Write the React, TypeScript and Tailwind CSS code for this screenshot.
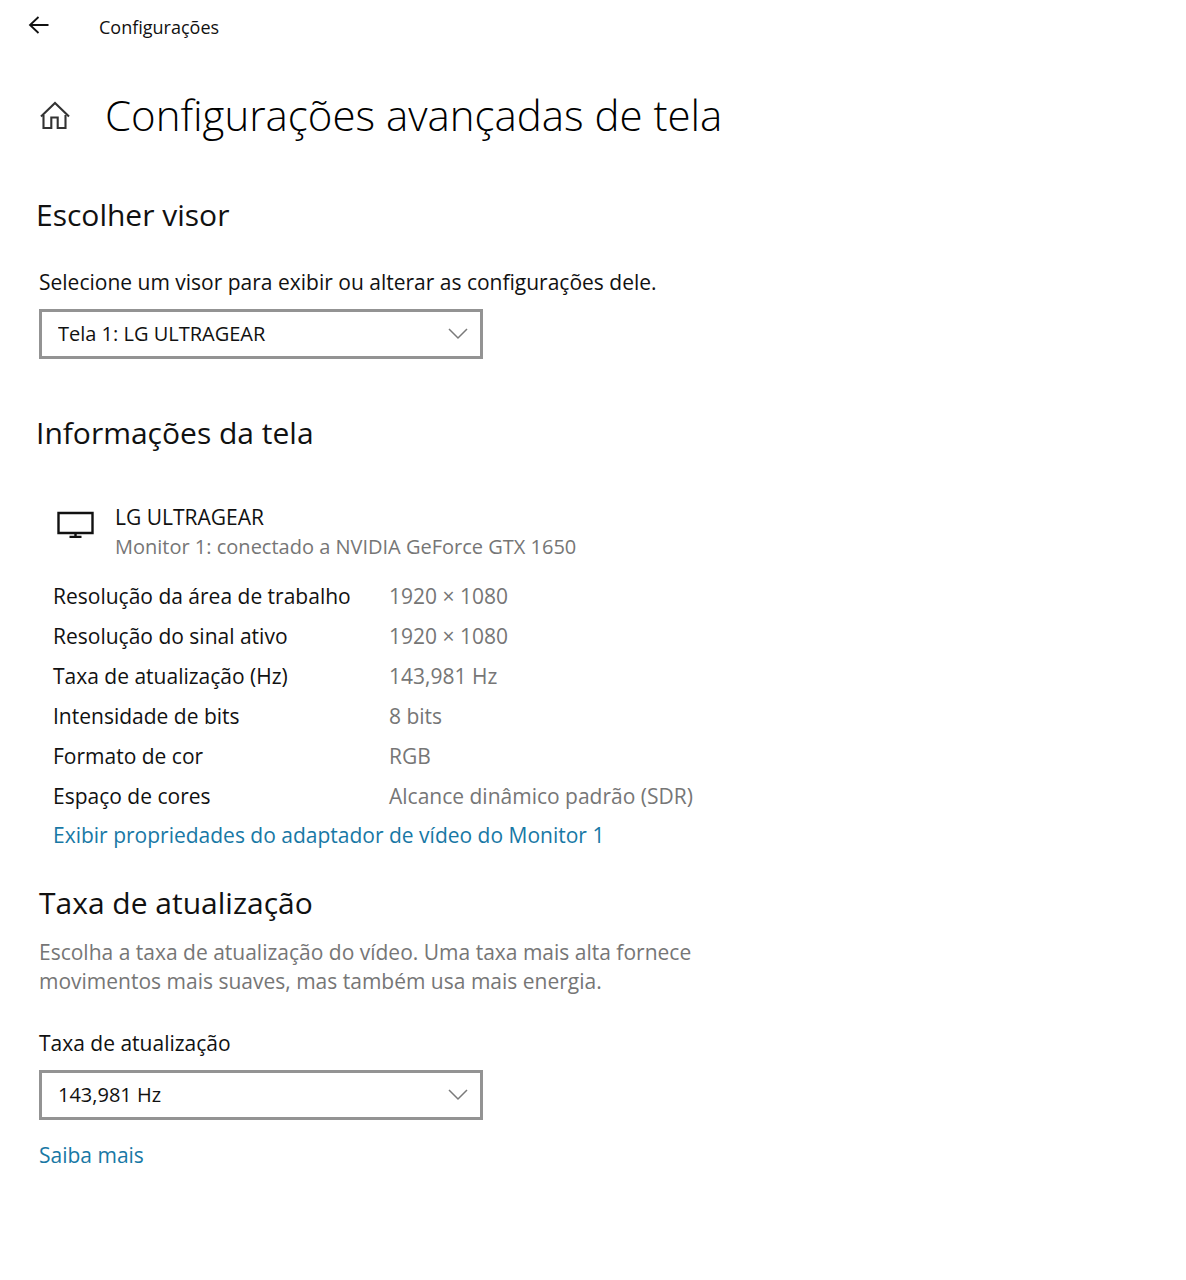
import React, { useState } from 'react';
import { clsx } from 'clsx';

const displayInfo = [
  { label: 'Resolução da área de trabalho', value: '1920 × 1080' },
  { label: 'Resolução do sinal ativo', value: '1920 × 1080' },
  { label: 'Taxa de atualização (Hz)', value: '143,981 Hz' },
  { label: 'Intensidade de bits', value: '8 bits' },
  { label: 'Formato de cor', value: 'RGB' },
  { label: 'Espaço de cores', value: 'Alcance dinâmico padrão (SDR)' },
];

const BackIcon = () => (
  <svg width="21" height="18" viewBox="0 0 21 18" fill="none" stroke="currentColor" strokeWidth="1.8">
    <path d="M20.5 9H2M10.5 1L2 9l8.5 8" />
  </svg>
);

const HomeIcon = () => (
  <svg width="31" height="28" viewBox="0 0 31 28" fill="none" stroke="currentColor" strokeWidth="2.1">
    <path d="M2 15.500L16 2l14 13.500" />
    <path d="M4.500 14v13h7.800V16.500h6.400V27h7.800V14" />
  </svg>
);

const MonitorIcon = () => (
  <svg width="38" height="28" viewBox="0 0 38 28" fill="none" stroke="currentColor" strokeWidth="2.4">
    <path d="M2.500 3h34v20h-34z" />
    <path d="M19.500 23v4M13.500 27h12" />
  </svg>
);

const ChevronIcon = () => (
  <svg width="20" height="12" viewBox="0 0 20 12" fill="none" stroke="currentColor" strokeWidth="1.5">
    <path d="M1 1l9 9 9-9" />
  </svg>
);

interface ComboBoxProps {
  id: string;
  label: string;
  options: string[];
  className?: string;
}

const ComboBox: React.FC<ComboBoxProps> = ({ id, label, options, className }) => {
  const [value, setValue] = useState(options[0]);

  return (
    <div className={clsx('px-[3px]', className)}>
      <label htmlFor={id} className="block leading-[30px]">{label}</label>
      <div className="relative mt-3 w-full max-w-[444px]">
        <select
          id={id}
          value={value}
          onChange={(e) => setValue(e.target.value)}
          className="block h-[50px] w-full appearance-none border-3 border-[#939393] bg-white pl-4 pr-12 text-[20px]"
        >
          {options.map((option) => (
            <option key={option}>{option}</option>
          ))}
        </select>
        <span className="pointer-events-none absolute inset-y-0 right-[15px] flex items-center text-[#7a7a7a]">
          <ChevronIcon />
        </span>
      </div>
    </div>
  );
};

export default function App() {
  return (
    <div className="min-h-screen bg-white pb-10 font-['Open_Sans','Noto_Sans',sans-serif] text-[21px] text-[#111]">
      {/* Title bar */}
      <header className="flex h-[54px] items-center gap-[50px] pl-7">
        <button type="button" aria-label="Voltar" className="pb-1">
          <BackIcon />
        </button>
        <span className="text-[18px]">Configurações</span>
      </header>

      <main className="px-9">
        <div className="mt-[29px] flex items-center gap-[35px] pl-[3px]">
          <button type="button" aria-label="Início" className="text-[#333]">
            <HomeIcon />
          </button>
          <h1 className="text-[42px] font-light leading-[64px] text-black">Configurações avançadas de tela</h1>
        </div>

        <section className="mt-12">
          <h2 className="text-[30px] leading-10">Escolher visor</h2>
          <ComboBox
            id="visor"
            label="Selecione um visor para exibir ou alterar as configurações dele."
            options={['Tela 1: LG ULTRAGEAR']}
            className="mt-8"
          />
        </section>

        <section className="mt-[54px]">
          <h2 className="text-[30px] leading-10">Informações da tela</h2>
          <div className="mt-[49px] flex gap-[21px] pl-5">
            <div className="pt-2">
              <MonitorIcon />
            </div>
            <div className="leading-[30px]">
              <p>LG ULTRAGEAR</p>
              <p className="text-[20px] text-[#767676]">Monitor 1: conectado a NVIDIA GeForce GTX 1650</p>
            </div>
          </div>
          <table className="ml-[17px] mt-[15px]">
            <tbody>
              {displayInfo.map((row) => (
                <tr key={row.label} className="h-10">
                  <th scope="row" className="w-[336px] p-0 text-left font-normal">{row.label}</th>
                  <td className="p-0 text-[#767676]">{row.value}</td>
                </tr>
              ))}
            </tbody>
          </table>
          <a href="#adaptador" className="ml-[17px] inline-block leading-[36px] text-[#1878a5]">
            Exibir propriedades do adaptador de vídeo do Monitor 1
          </a>
        </section>

        <section className="mt-[30px]">
          <h2 className="px-[3px] text-[30px] leading-10">Taxa de atualização</h2>
          <p className="mt-[15px] max-w-[680px] px-[3px] leading-[29px] text-[#767676]">
            Escolha a taxa de atualização do vídeo. Uma taxa mais alta fornece movimentos mais suaves, mas também usa mais energia.
          </p>
          <ComboBox id="taxa" label="Taxa de atualização" options={['143,981 Hz']} className="mt-8" />
          <a href="#saiba-mais" className="ml-[3px] mt-5 inline-block leading-[30px] text-[#1878a5]">Saiba mais</a>
        </section>
      </main>
    </div>
  );
}
